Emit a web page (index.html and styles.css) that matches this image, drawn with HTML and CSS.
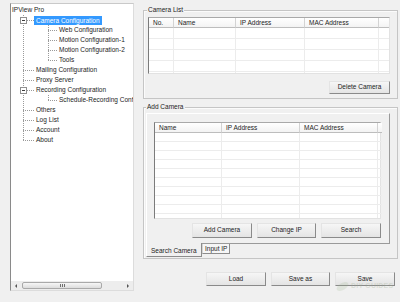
FILE: index.html
```html
<!DOCTYPE html>
<html>
<head>
<meta charset="utf-8">
<link rel="stylesheet" href="styles.css">
</head>
<body>
<div class="app">
  <div class="tree">
    <div class="row root"><span class="label">IPView Pro</span></div>
    <div class="row"><span class="g g1 t"><span class="exp"></span></span><span class="label sel">Camera Configuration</span></div>
    <div class="row"><span class="g g1 i"></span><span class="g g2 t"></span><span class="label">Web Configuration</span></div>
    <div class="row"><span class="g g1 i"></span><span class="g g2 t"></span><span class="label">Motion Configuration-1</span></div>
    <div class="row"><span class="g g1 i"></span><span class="g g2 t"></span><span class="label">Motion Configuration-2</span></div>
    <div class="row"><span class="g g1 i"></span><span class="g g2 l"></span><span class="label">Tools</span></div>
    <div class="row"><span class="g g1 t"></span><span class="label">Mailing Configuration</span></div>
    <div class="row"><span class="g g1 t"></span><span class="label">Proxy Server</span></div>
    <div class="row"><span class="g g1 t"><span class="exp"></span></span><span class="label">Recording Configuration</span></div>
    <div class="row"><span class="g g1 i"></span><span class="g g2 l"></span><span class="label clip">Schedule-Recording Configuration</span></div>
    <div class="row"><span class="g g1 t"></span><span class="label">Others</span></div>
    <div class="row"><span class="g g1 t"></span><span class="label">Log List</span></div>
    <div class="row"><span class="g g1 t"></span><span class="label">Account</span></div>
    <div class="row"><span class="g g1 l"></span><span class="label">About</span></div>
    <div class="spacer"></div>
    <div class="hscroll">
      <span class="arr arr-left"></span>
      <span class="thumb"><span class="grip"></span></span>
      <span class="spacer"></span>
      <span class="arr arr-right"></span>
    </div>
  </div>

  <div class="main">
    <div class="group g-list">
      <div class="legend">Camera List</div>
      <div class="list list1">
        <div class="hd">No.</div>
        <div class="hd">Name</div>
        <div class="hd">IP Address</div>
        <div class="hd">MAC Address</div>
        <div class="hd"></div>
        <div class="bd"></div>
      </div>
      <div class="btn-row">
        <button class="btn btn-del">Delete Camera</button>
      </div>
    </div>

    <div class="group g-add">
      <div class="legend">Add Camera</div>
      <div class="tabpanel">
        <div class="list list2">
          <div class="hd">Name</div>
          <div class="hd">IP Address</div>
          <div class="hd">MAC Address</div>
          <div class="hd"></div>
          <div class="bd"></div>
        </div>
        <div class="btn-row btn-row2">
          <button class="btn btn-w60">Add Camera</button>
          <button class="btn btn-w59">Change IP</button>
          <button class="btn btn-w60">Search</button>
        </div>
      </div>
      <div class="tabs">
        <span class="tab active">Search Camera</span>
        <span class="tab">Input IP</span>
      </div>
    </div>

    <div class="actions">
      <button class="btn btn-act btn-w60">Load</button>
      <button class="btn btn-act btn-w59">Save as</button>
      <button class="btn btn-act btn-w60">Save</button>
    </div>
  </div>
</div>
<div class="watermark"><span class="leaf"></span><span class="wm-text">DIY GUIDES</span></div>
</body>
</html>
```

FILE: styles.css
```css
html, body {
  margin: 0;
  padding: 0;
}
body {
  width: 400px;
  height: 302px;
  overflow: hidden;
  background: #f0f0f0;
  font-family: "Liberation Sans", Arial, sans-serif;
  font-size: 6.5px;
  line-height: 10px;
  color: #1c1c1c;
}

.app {
  display: flex;
  align-items: flex-start;
}

/* ---------- tree ---------- */
.tree {
  margin: 3px 0 0 10px;
  width: 124px;
  height: 288px;
  box-sizing: border-box;
  border: 1px solid;
  border-color: #c9c9c9 #dcdcdc #dcdcdc #8a8a8a;
  background: #fff;
  display: flex;
  flex-direction: column;
  padding: 1px 0 0 1px;
  overflow: hidden;
}
.row {
  display: flex;
  height: 10px;
  flex: none;
  white-space: nowrap;
  min-width: 0;
}
.label {
  padding: 0 2px;
  line-height: 10px;
}
.clip {
  min-width: 0;
  overflow: hidden;
}
.root .label { padding: 0; }
.sel {
  background: #3399ff;
  color: #fff;
  height: 9px;
  line-height: 9px;
  margin-top: 1px;
}
.g {
  flex: none;
  height: 10px;
  display: flex;
  align-items: center;
}
.g1 { width: 22px; }
.g2 { width: 23px; }

.g1.t {
  background:
    repeating-linear-gradient(to bottom, #9a9a9a 0 1px, transparent 1px 2px) 11px 0 / 1px 100% no-repeat,
    repeating-linear-gradient(to right, #9a9a9a 0 1px, transparent 1px 2px) 11px 5px / 11px 1px no-repeat;
}
.g1.l {
  background:
    repeating-linear-gradient(to bottom, #9a9a9a 0 1px, transparent 1px 2px) 11px 0 / 1px 6px no-repeat,
    repeating-linear-gradient(to right, #9a9a9a 0 1px, transparent 1px 2px) 11px 5px / 11px 1px no-repeat;
}
.g1.i {
  background:
    repeating-linear-gradient(to bottom, #9a9a9a 0 1px, transparent 1px 2px) 11px 0 / 1px 100% no-repeat;
}
.g2.t {
  background:
    repeating-linear-gradient(to bottom, #9a9a9a 0 1px, transparent 1px 2px) 14px 0 / 1px 100% no-repeat,
    repeating-linear-gradient(to right, #9a9a9a 0 1px, transparent 1px 2px) 14px 5px / 9px 1px no-repeat;
}
.g2.l {
  background:
    repeating-linear-gradient(to bottom, #9a9a9a 0 1px, transparent 1px 2px) 14px 0 / 1px 6px no-repeat,
    repeating-linear-gradient(to right, #9a9a9a 0 1px, transparent 1px 2px) 14px 5px / 9px 1px no-repeat;
}
.exp {
  width: 7px;
  height: 7px;
  box-sizing: border-box;
  border: 1px solid #8f8f8f;
  background: linear-gradient(#3a3a3a, #3a3a3a) center / 3px 1px no-repeat, #fff;
  margin-left: 8px;
}

.spacer { flex: 1; }

.hscroll {
  flex: none;
  height: 9px;
  margin-left: -1px;
  display: flex;
  align-items: center;
  background: #ededed;
}
.arr {
  flex: none;
  width: 10px;
  height: 9px;
  display: flex;
  align-items: center;
  justify-content: center;
}
.arr::before {
  content: "";
  border-top: 2px solid transparent;
  border-bottom: 2px solid transparent;
}
.arr-left::before { border-right: 2px solid #555; }
.arr-right::before { border-left: 2px solid #555; }
.thumb {
  flex: none;
  margin-left: 1px;
  width: 80px;
  height: 7px;
  box-sizing: border-box;
  border: 1px solid #a9a9a9;
  border-radius: 2px;
  background: linear-gradient(#f7f7f7, #dcdcdc);
  display: flex;
  align-items: center;
  justify-content: center;
}
.grip {
  width: 5px;
  height: 3px;
  background: repeating-linear-gradient(to right, #6f6f6f 0 1px, transparent 1px 2px);
}

/* ---------- main ---------- */
.main {
  margin-left: 9px;
  width: 255px;
  display: flex;
  flex-direction: column;
}
.group {
  border: 1px solid #c5c5c5;
  box-shadow: inset 1px 1px 0 #fbfbfb;
  display: flex;
  flex-direction: column;
}
.legend {
  align-self: flex-start;
  margin-top: -5px;
  line-height: 8px;
  padding: 0 1px;
  background: #f0f0f0;
}
.g-list {
  margin-top: 10px;
  padding: 0 7px 4px 4px;
}
.g-list .legend { margin-left: -1px; }
.g-add {
  margin-top: 8px;
  padding: 0 7px 1px 2px;
}

/* lists */
.list {
  display: grid;
  background: #fff;
  border: 1px solid;
  border-color: #a9a9a9 #e2e2e2 #e2e2e2 #7b7b7b;
}
.hd {
  height: 10px;
  box-sizing: border-box;
  border-right: 1px solid #d3d3d3;
  border-bottom: 1px solid #bdbdbd;
  background: linear-gradient(#ffffff, #f3f3f3);
  padding-left: 4px;
  line-height: 9px;
  white-space: nowrap;
  overflow: hidden;
}
.hd:nth-last-child(2) { border-right: 0; }
.bd { grid-column: 1 / -1; }

.list1 {
  margin-top: 3px;
  grid-template-columns: 25px 62px 69px 74px 1fr;
}
.list1 .bd {
  height: 45px;
  background:
    linear-gradient(#ececec, #ececec) 24px 0 / 1px 100% no-repeat,
    linear-gradient(#ececec, #ececec) 86px 0 / 1px 100% no-repeat,
    linear-gradient(#ececec, #ececec) 155px 0 / 1px 100% no-repeat,
    linear-gradient(#ececec, #ececec) 229px 0 / 1px 100% no-repeat,
    repeating-linear-gradient(to bottom, transparent 0 10px, #ececec 10px 11px);
}

.list2 {
  grid-template-columns: 67px 78px 78px 1fr;
}
.list2 .bd {
  height: 85px;
  background:
    linear-gradient(#ececec, #ececec) 66px 0 / 1px 100% no-repeat,
    linear-gradient(#ececec, #ececec) 144px 0 / 1px 100% no-repeat,
    linear-gradient(#ececec, #ececec) 222px 0 / 1px 100% no-repeat,
    repeating-linear-gradient(to bottom, transparent 0 8px, #ececec 8px 9px);
}

/* buttons */
.btn {
  font: inherit;
  color: inherit;
  margin: 0;
  padding: 0;
  box-sizing: border-box;
  border: 1px solid;
  border-color: #e4e4e4 #8a8a8a #8a8a8a #e4e4e4;
  background: linear-gradient(#f6f6f6, #e4e4e4);
  text-align: center;
  line-height: 1;
  white-space: nowrap;
}
.btn-row {
  display: flex;
  justify-content: flex-end;
  gap: 5px;
}
.g-list .btn-row { margin-top: 7px; }
.btn-del { width: 61px; height: 13px; }
.btn-row2 { margin-top: 4px; }
.btn-row2 .btn { height: 15px; }
.btn-w60 { width: 60px; }
.btn-w59 { width: 59px; }

/* tabs */
.tabpanel {
  margin-top: 2px;
  border: 1px solid;
  border-color: #ffffff #9a9a9a #9a9a9a #ffffff;
  padding: 8px 8px 5px 7px;
  display: flex;
  flex-direction: column;
}
.tabs {
  display: flex;
  align-items: flex-start;
}
.tab {
  box-sizing: border-box;
  white-space: nowrap;
}
.tab.active {
  margin-top: -1px;
  width: 56px;
  height: 14px;
  padding: 3px 0 0 4px;
  line-height: 9px;
  border-left: 1px solid #fff;
  border-right: 1px solid #8c8c8c;
  border-bottom: 1px solid #8c8c8c;
  background: #f0f0f0;
}
.tab:not(.active) {
  width: 28px;
  height: 10px;
  padding: 0 0 0 2px;
  line-height: 9px;
  border-left: 1px solid #d4d4d4;
  border-right: 1px solid #8c8c8c;
  border-bottom: 1px solid #8c8c8c;
  background: #f6f6f6;
}

/* bottom actions */
.actions {
  display: flex;
  justify-content: flex-end;
  gap: 5px;
  margin-top: 13px;
  padding-right: 3px;
}
.btn-act { height: 14px; }

/* watermark */
.watermark {
  position: absolute;
  left: 336px;
  top: 281px;
  display: flex;
  align-items: center;
  gap: 2px;
  pointer-events: none;
}
.leaf {
  width: 13px;
  height: 7px;
  border-radius: 50%;
  background: rgba(150, 175, 135, 0.18);
  transform: rotate(-30deg);
}
.wm-text {
  font-family: "Liberation Sans", Arial, sans-serif;
  font-weight: bold;
  font-size: 7px;
  color: rgba(160, 175, 145, 0.3);
  letter-spacing: 0.2px;
}
```
